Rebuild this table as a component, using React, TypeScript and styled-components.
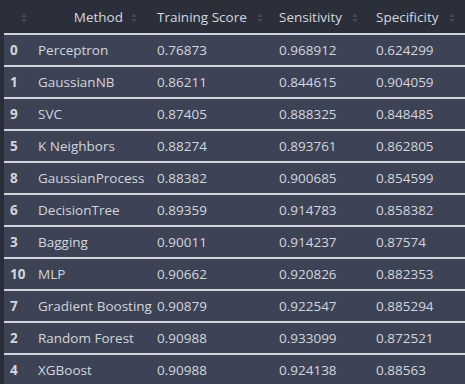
import React from 'react';
import styled, { createGlobalStyle } from 'styled-components';

const GlobalStyle = createGlobalStyle`
  html, body {
    margin: 0;
    padding: 0;
    background: #2b2f3a;
  }
  body {
    font-family: "Open Sans", "DejaVu Sans", sans-serif;
    color: #d2d6dd;
  }
`;

interface Row {
  idx: number;
  method: string;
  training: string;
  sensitivity: string;
  specificity: string;
}

const rows: Row[] = [
  { idx: 0, method: 'Perceptron', training: '0.76873', sensitivity: '0.968912', specificity: '0.624299' },
  { idx: 1, method: 'GaussianNB', training: '0.86211', sensitivity: '0.844615', specificity: '0.904059' },
  { idx: 9, method: 'SVC', training: '0.87405', sensitivity: '0.888325', specificity: '0.848485' },
  { idx: 5, method: 'K Neighbors', training: '0.88274', sensitivity: '0.893761', specificity: '0.862805' },
  { idx: 8, method: 'GaussianProcess', training: '0.88382', sensitivity: '0.900685', specificity: '0.854599' },
  { idx: 6, method: 'DecisionTree', training: '0.89359', sensitivity: '0.914783', specificity: '0.858382' },
  { idx: 3, method: 'Bagging', training: '0.90011', sensitivity: '0.914237', specificity: '0.87574' },
  { idx: 10, method: 'MLP', training: '0.90662', sensitivity: '0.920826', specificity: '0.882353' },
  { idx: 7, method: 'Gradient Boosting', training: '0.90879', sensitivity: '0.922547', specificity: '0.885294' },
  { idx: 2, method: 'Random Forest', training: '0.90988', sensitivity: '0.933099', specificity: '0.872521' },
  { idx: 4, method: 'XGBoost', training: '0.90988', sensitivity: '0.924138', specificity: '0.88563' },
];

const Wrapper = styled.div`
  padding-left: 4px;
  width: 461px;
  height: 384px;
  overflow: hidden;
`;

const Table = styled.table`
  width: 461px;
  border-collapse: collapse;
  table-layout: fixed;
  font-size: 13.5px;
`;

const HeadCell = styled.th<{ $align?: 'left' | 'right' }>`
  height: 33px;
  padding: 0 ${p => (p.$align === 'right' ? '13px' : '0')} 0 7px;
  font-weight: 400;
  text-align: ${p => p.$align ?? 'left'};
  white-space: nowrap;
  color: #d4d8df;
  border-bottom: 2px solid #cfd3da;
`;

const SortIcon = styled.svg<{ $gap?: number }>`
  display: inline-block;
  margin-left: ${p => p.$gap ?? 9}px;
  width: 6px;
  height: 10px;
  vertical-align: -1px;
`;

const BodyRow = styled.tr`
  background: #3d4354;
  border-bottom: 2px solid #cfd3da;
  &:last-child {
    border-bottom: none;
  }
`;

const Cell = styled.td`
  height: 30px;
  padding: 0 0 0 7px;
  white-space: nowrap;
`;

const IndexCell = styled(Cell)`
  padding-left: 6px;
  font-weight: 700;
`;

const Sort = ({ gap }: { gap?: number }) => (
  <SortIcon $gap={gap} viewBox="0 0 6 10">
    <path d="M3 0.5 L5.5 4 L0.5 4 Z M3 9.5 L5.5 6 L0.5 6 Z" fill="#454a59" />
  </SortIcon>
);

export default function App() {
  return (
    <>
      <GlobalStyle />
      <Wrapper>
        <Table>
          <colgroup>
            <col style={{ width: 27 }} />
            <col style={{ width: 119 }} />
            <col style={{ width: 122 }} />
            <col style={{ width: 97 }} />
            <col style={{ width: 96 }} />
          </colgroup>
          <thead>
            <tr>
              <HeadCell><Sort gap={10} /></HeadCell>
              <HeadCell $align="right">Method<Sort gap={8} /></HeadCell>
              <HeadCell>Training Score<Sort gap={10} /></HeadCell>
              <HeadCell>Sensitivity<Sort gap={10} /></HeadCell>
              <HeadCell>Specificity<Sort gap={10} /></HeadCell>
            </tr>
          </thead>
          <tbody>
            {rows.map(r => (
              <BodyRow key={r.idx}>
                <IndexCell>{r.idx}</IndexCell>
                <Cell>{r.method}</Cell>
                <Cell>{r.training}</Cell>
                <Cell>{r.sensitivity}</Cell>
                <Cell>{r.specificity}</Cell>
              </BodyRow>
            ))}
          </tbody>
        </Table>
      </Wrapper>
    </>
  );
}
